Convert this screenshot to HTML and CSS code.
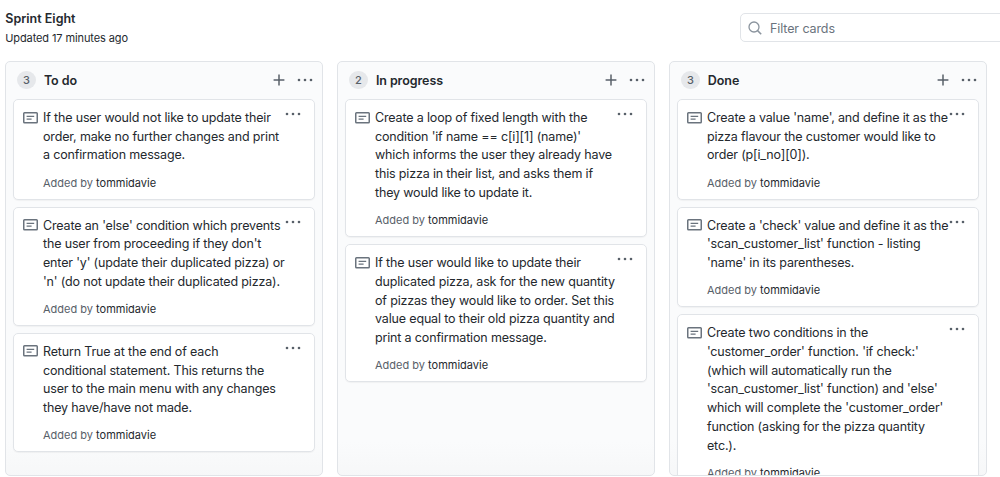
FILE: index.html
```
<!DOCTYPE html>
<html lang="en">
<head>
<meta charset="utf-8">
<title>Sprint Eight</title>
<link rel="stylesheet" href="styles.css">
</head>
<body>
<svg class="sprite" aria-hidden="true">
  <symbol id="plus" viewBox="0 0 12 12"><path d="M6 .6v10.8M.6 6h10.8" fill="none" stroke="currentColor" stroke-width="1.5"/></symbol>
  <symbol id="dots" viewBox="0 0 16 4"><circle cx="2" cy="2" r="1.3"/><circle cx="8" cy="2" r="1.3"/><circle cx="14" cy="2" r="1.3"/></symbol>
  <symbol id="note" viewBox="0 0 15 12"><rect x=".75" y=".75" width="13.5" height="10" rx=".8" fill="none" stroke="currentColor" stroke-width="1.5"/><path d="M3.6 4.4h7.6M3.6 7.2h5" fill="none" stroke="currentColor" stroke-width="1.2"/></symbol>
</svg>
<header class="top">
  <div>
    <h1 class="title">Sprint Eight</h1>
    <p class="updated">Updated 17 minutes ago</p>
  </div>
  <label class="search">
    <svg class="search-icon" viewBox="0 0 14 14"><circle cx="6" cy="6" r="5" fill="none" stroke="currentColor" stroke-width="1.3"/><path d="M9.6 9.6l3.6 3.6" stroke="currentColor" stroke-width="1.5"/></svg>
    <span>Filter cards</span>
  </label>
</header>
<main class="board">
  <section class="column">
    <div class="head"><span class="count">3</span><h2 class="name">To do</h2><svg class="plus"><use href="#plus"/></svg><svg class="dots"><use href="#dots"/></svg></div>
    <article class="card"><svg class="note"><use href="#note"/></svg><div class="body"><p class="text">If the user would not like to update their<br>order, make no further changes and print<br>a confirmation message.</p><p class="by">Added by <b>tommidavie</b></p></div><svg class="dots menu"><use href="#dots"/></svg></article>
    <article class="card"><svg class="note"><use href="#note"/></svg><div class="body"><p class="text">Create an 'else' condition which prevents<br>the user from proceeding if they don't<br>enter 'y' (update their duplicated pizza) or<br>'n' (do not update their duplicated pizza).</p><p class="by">Added by <b>tommidavie</b></p></div><svg class="dots menu"><use href="#dots"/></svg></article>
    <article class="card"><svg class="note"><use href="#note"/></svg><div class="body"><p class="text">Return True at the end of each<br>conditional statement. This returns the<br>user to the main menu with any changes<br>they have/have not made.</p><p class="by">Added by <b>tommidavie</b></p></div><svg class="dots menu"><use href="#dots"/></svg></article>
  </section>
  <section class="column">
    <div class="head"><span class="count">2</span><h2 class="name">In progress</h2><svg class="plus"><use href="#plus"/></svg><svg class="dots"><use href="#dots"/></svg></div>
    <article class="card"><svg class="note"><use href="#note"/></svg><div class="body"><p class="text">Create a loop of fixed length with the<br>condition 'if name == c[i][1] (name)'<br>which informs the user they already have<br>this pizza in their list, and asks them if<br>they would like to update it.</p><p class="by">Added by <b>tommidavie</b></p></div><svg class="dots menu"><use href="#dots"/></svg></article>
    <article class="card"><svg class="note"><use href="#note"/></svg><div class="body"><p class="text">If the user would like to update their<br>duplicated pizza, ask for the new quantity<br>of pizzas they would like to order. Set this<br>value equal to their old pizza quantity and<br>print a confirmation message.</p><p class="by">Added by <b>tommidavie</b></p></div><svg class="dots menu"><use href="#dots"/></svg></article>
  </section>
  <section class="column">
    <div class="head"><span class="count">3</span><h2 class="name">Done</h2><svg class="plus"><use href="#plus"/></svg><svg class="dots"><use href="#dots"/></svg></div>
    <article class="card"><svg class="note"><use href="#note"/></svg><div class="body"><p class="text">Create a value 'name', and define it as the<br>pizza flavour the customer would like to<br>order (p[i_no][0]).</p><p class="by">Added by <b>tommidavie</b></p></div><svg class="dots menu"><use href="#dots"/></svg></article>
    <article class="card"><svg class="note"><use href="#note"/></svg><div class="body"><p class="text">Create a 'check' value and define it as the<br>'scan_customer_list' function - listing<br>'name' in its parentheses.</p><p class="by">Added by <b>tommidavie</b></p></div><svg class="dots menu"><use href="#dots"/></svg></article>
    <article class="card"><svg class="note"><use href="#note"/></svg><div class="body"><p class="text">Create two conditions in the<br>'customer_order' function. 'if check:'<br>(which will automatically run the<br>'scan_customer_list' function) and 'else'<br>which will complete the 'customer_order'<br>function (asking for the pizza quantity<br>etc.).</p><p class="by">Added by <b>tommidavie</b></p></div><svg class="dots menu"><use href="#dots"/></svg></article>
  </section>
</main>
</body>
</html>
```
FILE: styles.css
```
* { box-sizing: border-box; }
body { margin: 0; height: 477px; overflow: hidden; background: #fff; color: #24292e; font-family: Inter, "Liberation Sans", sans-serif; font-size: 12.5px; display: flex; flex-direction: column; }
h1, h2, p { margin: 0; }
.sprite { position: absolute; width: 0; height: 0; }
.top { height: 61px; flex: none; display: flex; justify-content: space-between; align-items: flex-start; padding: 9px 0 0 5.3px; }
.title { font-size: 12.5px; line-height: 19px; font-weight: 600; }
.updated { font-size: 11px; line-height: 17px; margin-top: 2px; letter-spacing: -.11px; }
.search { width: 270px; height: 29px; margin: 4px -10px 0 0; border: 1px solid #e1e4e8; border-radius: 5px; display: flex; align-items: center; gap: 8px; padding: 1px 0 0 7px; color: #6a737d; letter-spacing: -.1px; }
.search-icon { width: 14px; height: 14px; color: #8b949e; }
.board { display: flex; gap: 14.2px; padding-left: 5.4px; height: 415px; }
.column { width: 317.8px; flex: none; height: 415px; overflow: hidden; border: 1px solid #e1e4e8; border-radius: 5px; background: linear-gradient(#fafbfc 0, #fafbfc 380px, #f6f7f8 415px); padding: 0 7px; display: flex; flex-direction: column; gap: 7.2px; }
.head { height: 30.2px; flex: none; display: flex; align-items: center; padding: 5px 2.5px 0 3.5px; color: #586069; }
.count { width: 19px; height: 18px; border-radius: 9px; background: #e6e8eb; font-size: 11px; line-height: 18px; text-align: center; font-weight: 500; }
.name { flex: 1; margin-left: 8px; font-size: 12.5px; line-height: 18px; font-weight: 600; color: #24292e; padding-top: 2px; letter-spacing: -.08px; }
.plus { width: 12px; height: 12px; }
.dots { width: 16px; height: 4px; margin-left: 12px; fill: currentColor; }
.card { flex: none; display: flex; background: #fff; border: 1px solid #e1e4e8; border-radius: 5px; padding: 8.6px 13px 0 9px; box-shadow: 0 1px 1px rgba(27,31,35,.04); color: #586069; }
.note { width: 15px; height: 12px; flex: none; margin: 2.6px 4.6px 0 0; color: #6a737d; }
.body { flex: 1; min-width: 0; color: #24292e; }
.text { line-height: 18.75px; white-space: nowrap; letter-spacing: -.155px; }
.by { font-size: 11px; line-height: 17px; margin-top: 9.5px; padding-bottom: 7px; color: #586069; }
.by b { font-weight: 400; color: #24292e; }
.menu { flex: none; margin: 3.4px 0 0; }
```
